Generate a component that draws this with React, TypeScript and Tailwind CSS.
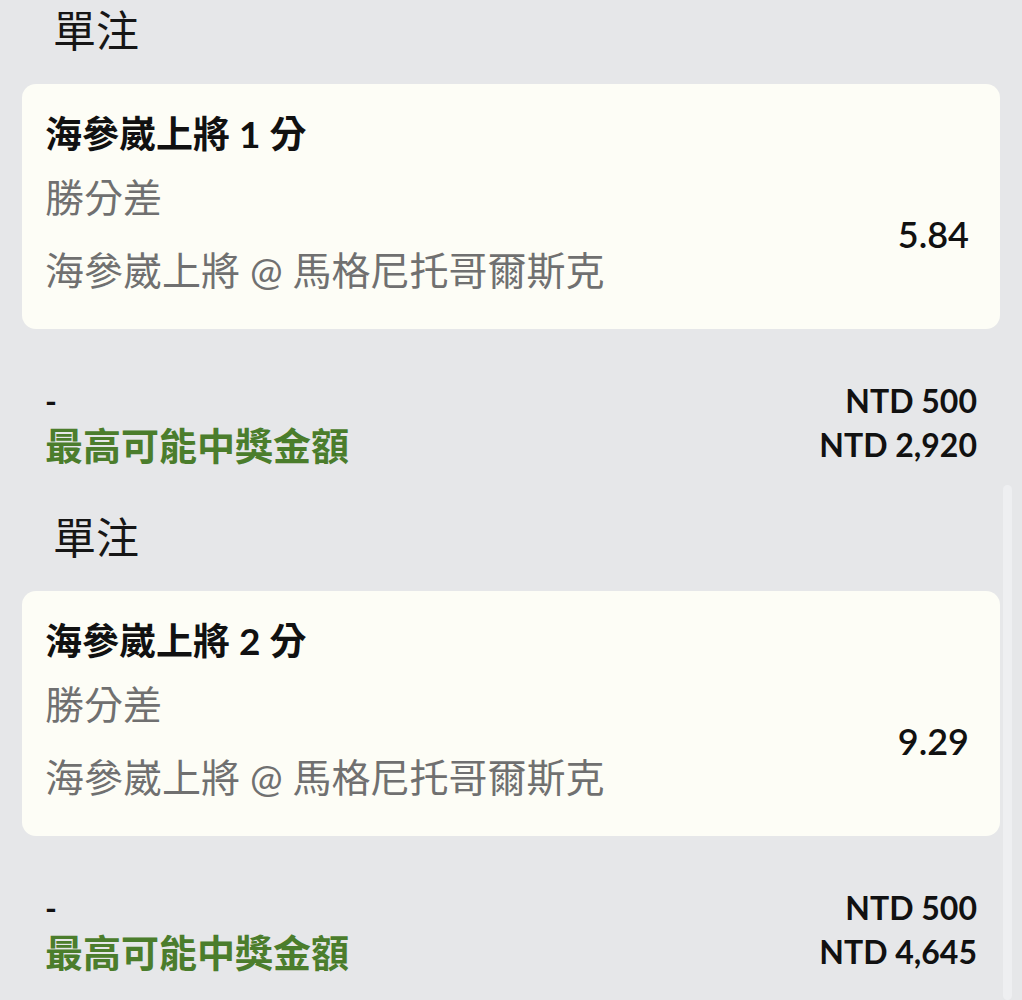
import React from "react";

const FONT = { fontFamily: "Lato, 'Noto Sans CJK TC', sans-serif" };

type Bet = { title: string; odds: string; stake: string; win: string };

const bets: Bet[] = [
  { title: "海參崴上將 1 分", odds: "5.84", stake: "NTD 500", win: "NTD 2,920" },
  { title: "海參崴上將 2 分", odds: "9.29", stake: "NTD 500", win: "NTD 4,645" },
];

function Section({ bet }: { bet: Bet }) {
  return (
    <div className="pb-[40px]">
      <div className="h-[60px] flex items-center pl-[31px] text-[43px] text-[#161616] leading-none">
        單注
      </div>
      <div className="mt-[24px] rounded-[14px] bg-[#fdfdf6] pl-[23px] pr-[31px] pt-[27px] pb-[37px]">
        <div className="h-[44px] flex items-center text-[37px] font-bold text-[#111111] leading-none">
          {bet.title}
        </div>
        <div className="mt-[20px] flex items-center justify-between">
          <div className="flex flex-col">
            <div className="h-[44px] flex items-center text-[39px] text-[#707070] leading-none">勝分差</div>
            <div className="mt-[29px] h-[44px] flex items-center text-[39px] text-[#707070] leading-none">
              海參崴上將 @ 馬格尼托哥爾斯克
            </div>
          </div>
          <div className="text-[36px] font-semibold text-[#111111] leading-none">{bet.odds}</div>
        </div>
      </div>
      <div className="mt-[50px] pl-[23px] pr-[23px]">
        <div className="h-[44px] flex items-center justify-between">
          <span className="text-[32px] font-bold text-[#111111] leading-none">-</span>
          <span className="text-[32px] font-bold text-[#111111] leading-none">{bet.stake}</span>
        </div>
        <div className="h-[44px] flex items-center justify-between">
          <span className="text-[38px] font-bold text-[#4b7d2c] leading-none">最高可能中獎金額</span>
          <span className="text-[32px] font-bold text-[#111111] leading-none">{bet.win}</span>
        </div>
      </div>
    </div>
  );
}

export default function App() {
  return (
    <div style={FONT} className="relative w-[1022px] h-[1000px] overflow-hidden bg-[#e6e7e9] px-[22px]">
      {bets.map((b, i) => (
        <Section key={i} bet={b} />
      ))}
      <div className="absolute left-[1003px] top-[485px] w-[9px] h-[515px] rounded-full bg-[#eeeff1]" />
    </div>
  );
}
